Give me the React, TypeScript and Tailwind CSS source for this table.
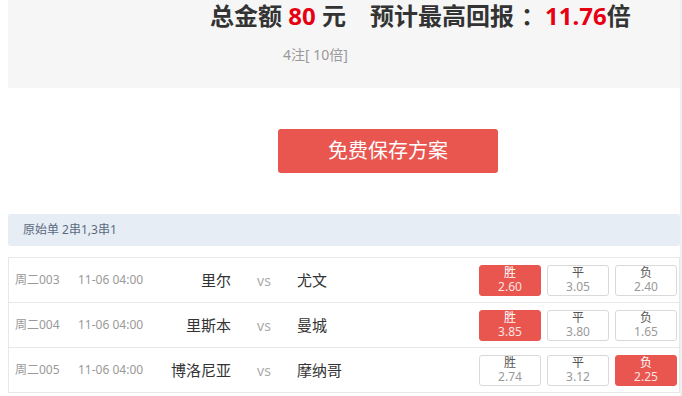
const matches = [
  { no: "周二003", time: "11-06 04:00", home: "里尔", away: "尤文", odds: ["2.60", "3.05", "2.40"], pick: 0 },
  { no: "周二004", time: "11-06 04:00", home: "里斯本", away: "曼城", odds: ["3.85", "3.80", "1.65"], pick: 0 },
  { no: "周二005", time: "11-06 04:00", home: "博洛尼亚", away: "摩纳哥", odds: ["2.74", "3.12", "2.25"], pick: 2 },
]

const labels = ["胜", "平", "负"]

export default function App() {
  return (
    <div
      className="flex w-[682px] h-[396px] overflow-hidden bg-white"
      style={{ fontFamily: '"Noto Sans", "Noto Sans CJK SC", sans-serif' }}
    >
      <div className="ml-2 w-[672px] flex flex-col">
        <div className="h-[88px] bg-[#f6f6f6] flex flex-col">
          <div className="pl-[202px] h-[32px] leading-[32px] text-[24px] font-bold text-[#333] whitespace-nowrap">
            总金额 <span className="text-[#e60012]">80</span> 元<span className="inline-block w-[24px]" />预计最高回报<span className="inline-block w-[7px]" />：<span className="text-[#e60012]">11.76</span>倍
          </div>
          <div className="pl-[275px] mt-[12px] text-[14px] text-[#999]">4注[ 10倍]</div>
        </div>

        <div className="mt-[41px] pl-[270px]">
          <button className="w-[220px] h-[44px] rounded-[3px] bg-[#e8564f] text-white text-[20px]">
            免费保存方案
          </button>
        </div>

        <div className="mt-[41px] h-[32px] rounded-[3px] bg-[#e7edf5] flex items-center pl-[15px] text-[12px] text-[#5a6b7e]">
          原始单 2串1,3串1
        </div>

        <div className="mt-[11px] border-l border-r border-t border-[#e8e8e8]">
          {matches.map((m) => (
            <div key={m.no} className="h-[45px] border-b border-[#e8e8e8] flex items-center pl-[6px] pr-[2px]">
              <div className="w-[63px] text-[12px] text-[#999]">{m.no}</div>
              <div className="w-[80px] text-[12px] text-[#999]">{m.time}</div>
              <div className="w-[73px] text-right text-[15px] text-[#333]">{m.home}</div>
              <div className="w-[66px] text-center text-[14px] text-[#aaa]">vs</div>
              <div className="flex-1 text-[15px] text-[#333]">{m.away}</div>
              <div className="flex gap-[6px]">
                {labels.map((l, i) => {
                  const on = i === m.pick
                  return (
                    <div
                      key={l}
                      className={
                        on
                          ? "w-[62px] h-[31px] rounded-[3px] bg-[#e8564f] border border-[#e8564f] flex flex-col items-center justify-center"
                          : "w-[62px] h-[31px] rounded-[3px] bg-white border border-[#d9d9d9] flex flex-col items-center justify-center"
                      }
                    >
                      <span className={on ? "text-[12px] leading-[14px] text-white" : "text-[12px] leading-[14px] text-[#555]"}>{l}</span>
                      <span className={on ? "text-[12px] leading-[14px] text-[#fde4e2]" : "text-[12px] leading-[14px] text-[#999]"}>{m.odds[i]}</span>
                    </div>
                  )
                })}
              </div>
            </div>
          ))}
        </div>
      </div>
      <div className="ml-auto w-[2px] h-full bg-[#efefef]" />
    </div>
  )
}
